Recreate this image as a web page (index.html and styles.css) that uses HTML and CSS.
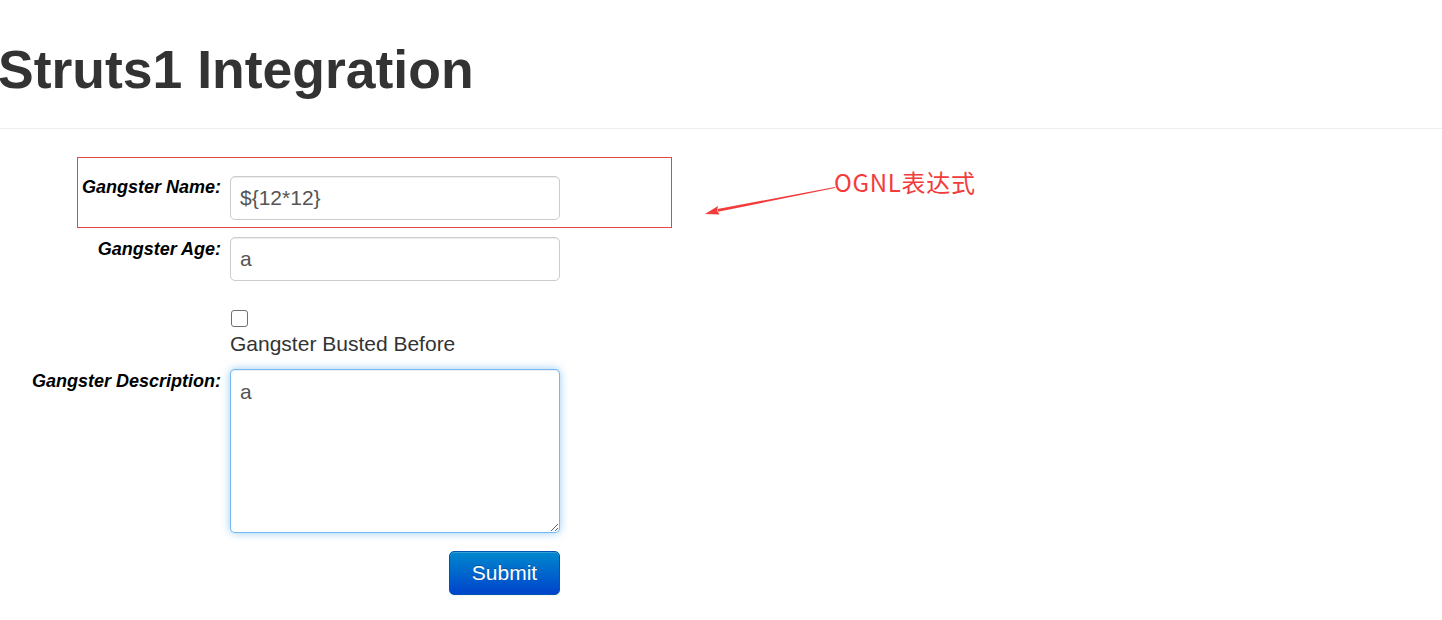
FILE: index.html
```html
<!DOCTYPE html>
<html lang="en">
<head>
<meta charset="utf-8">
<title>Struts1 Integration</title>
<link rel="stylesheet" href="styles.css">
</head>
<body>
<header class="page-header">
  <h1 class="title">Struts1 Integration</h1>
</header>
<form class="form">
  <div class="row row-name">
    <label class="lbl" for="name">Gangster Name:</label>
    <div class="ctl"><input class="field" id="name" type="text" value="${12*12}"></div>
  </div>
  <div class="row row-age">
    <label class="lbl" for="age">Gangster Age:</label>
    <div class="ctl"><input class="field" id="age" type="text" value="a"></div>
  </div>
  <div class="row row-check">
    <div class="lbl"></div>
    <div class="ctl">
      <input class="check" id="busted" type="checkbox">
      <label class="check-text" for="busted">Gangster Busted Before</label>
    </div>
  </div>
  <div class="row row-desc">
    <label class="lbl" for="desc">Gangster Description:</label>
    <div class="ctl"><textarea class="area" id="desc">a</textarea></div>
  </div>
  <div class="row row-actions">
    <div class="lbl"></div>
    <div class="ctl actions"><button class="btn" type="button">Submit</button></div>
  </div>
</form>
<div class="annot-box"></div>
<div class="annot">
  <svg class="annot-arrow" width="132" height="32" viewBox="0 0 132 32">
    <polygon points="131,1 131,2 14,25.8 13.4,23" fill="#f23b3b"/>
    <polygon points="1,28 14,20 13,24.4 15.5,28.5" fill="#f23b3b"/>
  </svg>
  <span class="annot-text">OGNL表达式</span>
</div>
</body>
</html>
```
FILE: styles.css
```css
html, body {
  margin: 0;
  padding: 0;
  background: #fff;
}
body {
  position: relative;
  width: 1442px;
  height: 620px;
  overflow: hidden;
  font-family: "Liberation Sans", Arial, Helvetica, sans-serif;
  color: #333;
}
.page-header {
  padding: 40px 0 28px;
  border-bottom: 1px solid #eee;
}
.title {
  margin: 0;
  font-size: 53.5px;
  line-height: 60px;
  font-weight: bold;
  color: #333;
  text-indent: -2px;
}
.form {
  margin: 0;
  padding-top: 47px;
}
.row {
  display: flex;
  gap: 9px;
}
.row-age { margin-top: 17px; }
.row-check { margin-top: 29px; }
.row-desc { margin-top: 10px; }
.row-actions { margin-top: 18px; }
.lbl {
  flex: 0 0 221px;
  text-align: right;
  font-size: 18px;
  line-height: 20px;
  font-weight: bold;
  font-style: italic;
  color: #000;
  padding-top: 1px;
  box-sizing: border-box;
}
.row-age .lbl,
.row-desc .lbl { padding-top: 2px; }
.ctl {
  width: 330px;
  display: flex;
  flex-direction: column;
}
.field {
  box-sizing: border-box;
  width: 330px;
  height: 44px;
  margin: 0;
  padding: 0 9px;
  border: 1px solid #ccc;
  border-radius: 5px;
  box-shadow: inset 0 1px 1px rgba(0,0,0,0.075);
  font-family: "Liberation Sans", Arial, Helvetica, sans-serif;
  font-size: 21px;
  color: #555;
  background: #fff;
  outline: none;
}
.check {
  -webkit-appearance: none;
  appearance: none;
  display: block;
  width: 17px;
  height: 17px;
  margin: 0 0 0 1px;
  border: 1.5px solid #707070;
  border-radius: 3px;
  background: #fff;
  box-sizing: border-box;
}
.check-text {
  display: block;
  margin-top: 2px;
  font-size: 21px;
  line-height: 30px;
  color: #333;
}
.area {
  box-sizing: border-box;
  width: 330px;
  height: 164px;
  margin: 0;
  padding: 7px 9px 6px;
  border: 1px solid rgba(82,168,236,0.8);
  border-radius: 5px;
  box-shadow: inset 0 1px 1px rgba(0,0,0,0.075), 0 0 8px rgba(82,168,236,0.6);
  font-family: "Liberation Sans", Arial, Helvetica, sans-serif;
  font-size: 21px;
  line-height: 30px;
  color: #555;
  background: #fff;
  outline: none;
  resize: both;
}
.actions {
  align-items: flex-end;
}
.btn {
  width: 111px;
  height: 44px;
  margin: 0;
  padding: 0;
  border: 1px solid #0055b3;
  border-radius: 5px;
  background: linear-gradient(to bottom, #0088cc, #0044cc);
  color: #fff;
  font-family: "Liberation Sans", Arial, Helvetica, sans-serif;
  font-size: 21px;
  text-shadow: 0 -1px 0 rgba(0,0,0,0.25);
  box-shadow: inset 0 1px 0 rgba(255,255,255,0.2), 0 1px 2px rgba(0,0,0,0.05);
  cursor: pointer;
}
.annot-box {
  position: absolute;
  left: 77px;
  top: 157px;
  width: 593px;
  height: 69px;
  border: 1px solid #e64545;
}
.annot {
  position: absolute;
  left: 704px;
  top: 167px;
  display: flex;
  align-items: flex-start;
}
.annot-arrow {
  margin-top: 19px;
  margin-right: -2px;
}
.annot-text {
  font-family: "Noto Sans CJK SC", "Noto Sans", sans-serif;
  font-size: 24px;
  line-height: 30px;
  letter-spacing: 0.7px;
  color: #f23b3b;
  white-space: nowrap;
}
```
